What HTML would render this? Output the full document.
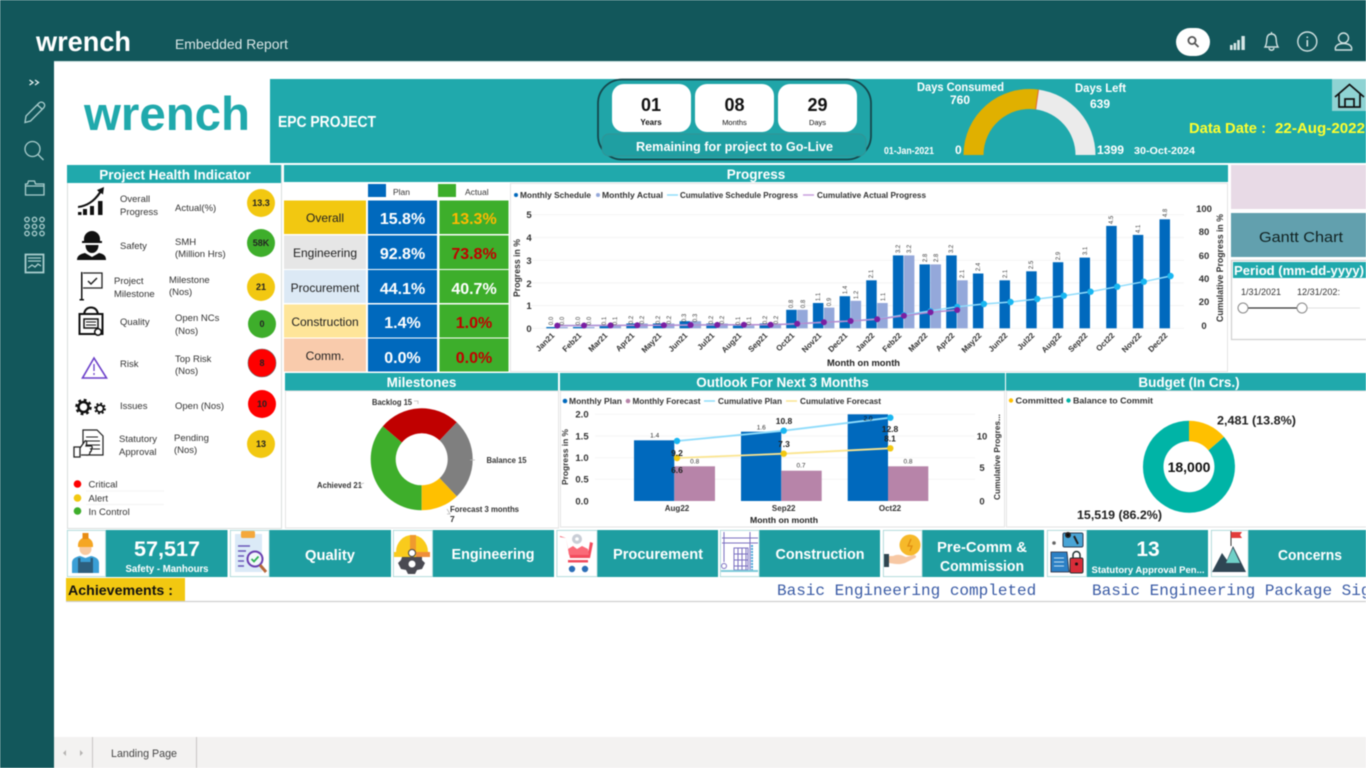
<!DOCTYPE html>
<html lang="en"><head><meta charset="utf-8"><title>Embedded Report</title>
<style>
html,body{margin:0;padding:0;width:1366px;height:768px;overflow:hidden;background:#fff}
svg{display:block;filter:blur(.5px)}
text{font-family:"Liberation Sans",sans-serif}
.m{font-family:"Liberation Mono",monospace}
.h{font-weight:bold;fill:#fff;font-size:13.5px;text-anchor:middle}
.l{font-size:9.5px;fill:#333}
.c{font-size:9px;fill:#222;text-anchor:middle;font-weight:bold}
.t{font-size:12px;fill:#222;text-anchor:middle}
.v{font-size:16px;font-weight:bold;text-anchor:middle}
.lg{font-size:8px;font-weight:bold;fill:#333}
.ax{font-size:9.5px;font-weight:bold;fill:#333;text-anchor:middle}
.xl{font-size:8px;font-weight:bold;fill:#333;text-anchor:end}
.d{font-size:6px;fill:#444;text-anchor:middle}
.cw{font-weight:bold;fill:#fff;text-anchor:middle;font-size:15px}
</style></head><body>
<svg width="1366" height="768" viewBox="0 0 1366 768" xmlns="http://www.w3.org/2000/svg">
<rect width="1366" height="768" fill="#fff"/>
<!-- top + side bars -->
<rect width="1366" height="61" fill="#12575b"/>
<rect y="61" width="54" height="707" fill="#12575b"/>
<rect x="54" y="61" width="1312" height="1" fill="#cfe3e3"/>
<text x="36" y="51" font-size="28" font-weight="bold" fill="#fff" textLength="95" lengthAdjust="spacingAndGlyphs">wrench</text>
<text x="175" y="49" font-size="14" fill="#d9e6e6" textLength="113" lengthAdjust="spacingAndGlyphs">Embedded Report</text>
<!-- top icons -->
<rect x="1176" y="28" width="34" height="28" rx="14" fill="#fff"/>
<g fill="none" stroke="#555" stroke-width="1.8"><circle cx="1192" cy="40.5" r="3.6"/><path d="M1195 43.5l3.5 3.5"/></g>
<g fill="#d6e6e6"><rect x="1230" y="45" width="2.6" height="5"/><rect x="1233.6" y="43" width="2.6" height="7"/><rect x="1237.2" y="40" width="2.6" height="10"/><rect x="1241.4" y="36" width="3.4" height="14"/></g>
<g fill="none" stroke="#cfe0e0" stroke-width="1.4">
<path d="M1265 47c2-3 1.5-6 2-9c.5-3 2.5-4 4.5-4s4 1 4.5 4c.5 3 0 6 2 9z"/><path d="M1269 48c.5 3 4.5 3 5 0M1271.5 34v-2"/>
<circle cx="1307.3" cy="41.5" r="9.5"/><path d="M1307.3 40v6.5M1307.3 36.5v1.5" stroke-width="1.6"/>
<circle cx="1343.5" cy="38" r="5"/><path d="M1335.5 50c-1-3.5 2-6.5 8-6.5s9 3 8 6.5z"/>
</g>
<!-- sidebar icons -->
<g fill="none" stroke="#a9cdcd" stroke-width="1.3">
<path d="M29.5 80l3.5 2.500-3.500 2.500M35 80l3.500 2.500-3.500 2.500" stroke="#e8f2f2"/>
<path d="M26 116l13-13c1.500-1.500 4-1 5 .5c1 1 1 3-.5 4.500L30.500 121l-5.500 1.500zM37.500 105l5 4.500"/>
<circle cx="32.500" cy="149" r="7.500"/><path d="M38 154.500l5.500 5.500"/>
<path d="M25.500 195v-11h2l1-3h6l1 3h8.500v11zM25.500 186h18"/>
<circle cx="27" cy="219.500" r="2.200"/><circle cx="34.500" cy="219.500" r="2.200"/><circle cx="42" cy="219.500" r="2.200"/>
<circle cx="27" cy="226.500" r="2.200"/><circle cx="34.500" cy="226.500" r="2.200"/><circle cx="42" cy="226.500" r="2.200"/>
<circle cx="27" cy="233.500" r="2.200"/><circle cx="34.500" cy="233.500" r="2.200"/><circle cx="42" cy="233.500" r="2.200"/>
<rect x="25.500" y="254.500" width="18" height="18" stroke-width="1.800"/><path d="M28 258h13M28 261h13M28 268l4-3 3 2 3-3 3 2"/>
</g>
<!-- header band -->
<text x="84" y="130" font-size="47" font-weight="bold" fill="#20a9ac" textLength="166" lengthAdjust="spacingAndGlyphs">wrench</text>
<rect x="270" y="79" width="1096" height="84" fill="#20a9ac"/>
<text x="278" y="127" font-size="16" font-weight="bold" fill="#fff" textLength="98" lengthAdjust="spacingAndGlyphs">EPC PROJECT</text>
<rect x="598" y="79.500" width="273" height="80" rx="24" fill="#20a5a8" stroke="#15474c" stroke-width="1.800"/>
<g fill="#fff"><rect x="612" y="84" width="79" height="48" rx="12"/><rect x="695" y="84" width="79" height="48" rx="12"/><rect x="778" y="84" width="79" height="48" rx="12"/></g>
<rect x="602" y="134" width="264" height="22" rx="7" fill="#1f9fa2" stroke="#3a8e90" stroke-width=".7"/>
<g fill="#111" font-weight="bold" text-anchor="middle">
<text x="651" y="111" font-size="18">01</text><text x="734.500" y="111" font-size="18">08</text><text x="817.500" y="111" font-size="18">29</text>
<text x="651" y="125" font-size="8">Years</text><text x="734.500" y="125" font-size="7.500" font-weight="normal">Months</text><text x="817.500" y="125" font-size="7.500" font-weight="normal">Days</text>
</g>
<text x="636" y="151" font-size="13" font-weight="bold" fill="#fff" textLength="197" lengthAdjust="spacingAndGlyphs">Remaining for project to Go-Live</text>
<!-- gauge -->
<path d="M963.500 155A66 66 0 0 1 1038.500 89.600L1035.700 109.400A46 46 0 0 0 983.500 155z" fill="#e0b000"/>
<path d="M1038.500 89.600A66 66 0 0 1 1095.500 155H1075.500A46 46 0 0 0 1035.700 109.400z" fill="#ebebeb"/>
<path d="M1038.500 89.600L1035.700 109.400" stroke="#e0663a" stroke-width="1"/>
<g fill="#fff" font-weight="bold" font-size="12">
<text x="917" y="91" textLength="87" lengthAdjust="spacingAndGlyphs">Days Consumed</text><text x="950" y="104" textLength="20" lengthAdjust="spacingAndGlyphs">760</text>
<text x="1075" y="92" textLength="51" lengthAdjust="spacingAndGlyphs">Days Left</text><text x="1090" y="108" textLength="20" lengthAdjust="spacingAndGlyphs">639</text>
<text x="884" y="154" font-size="10.500" textLength="50" lengthAdjust="spacingAndGlyphs">01-Jan-2021</text><text x="955" y="154">0</text>
<text x="1097" y="154" textLength="27" lengthAdjust="spacingAndGlyphs">1399</text><text x="1134" y="154" font-size="10.500" textLength="61" lengthAdjust="spacingAndGlyphs">30-Oct-2024</text>
</g>
<g fill="#ffff2e" font-weight="bold" font-size="15"><text x="1189" y="133" textLength="77" lengthAdjust="spacingAndGlyphs">Data Date :</text><text x="1275" y="133" textLength="90" lengthAdjust="spacingAndGlyphs">22-Aug-2022</text></g>
<rect x="1332" y="79" width="34" height="32" fill="#8fd3d3"/>
<path d="M1335 97l14.500-12.500L1364 97M1339 94v13h21V94M1345 107v-8h9v8" fill="none" stroke="#111" stroke-width="1.700"/>

<!-- Project health panel -->
<rect x="67.500" y="165.500" width="214" height="363" fill="#fff" stroke="#d9dedd"/>
<rect x="67" y="165" width="214" height="18" fill="#20a9ac"/>
<text class="h" x="175" y="179.500">Project Health Indicator</text>
<text class="l" x="120" y="202">Overall</text><text class="l" x="120" y="215">Progress</text><text class="l" x="175" y="211">Actual(%)</text>
<text class="l" x="120" y="249">Safety</text><text class="l" x="175" y="245">SMH</text><text class="l" x="175" y="257">(Million Hrs)</text>
<text class="l" x="114" y="284">Project</text><text class="l" x="114" y="297">Milestone</text><text class="l" x="169" y="283">Milestone</text><text class="l" x="169" y="295">(Nos)</text>
<text class="l" x="120" y="325">Quality</text><text class="l" x="175" y="321">Open NCs</text><text class="l" x="175" y="334">(Nos)</text>
<text class="l" x="120" y="367">Risk</text><text class="l" x="175" y="362">Top Risk</text><text class="l" x="175" y="374">(Nos)</text>
<text class="l" x="120" y="409">Issues</text><text class="l" x="175" y="409">Open (Nos)</text>
<text class="l" x="119" y="442">Statutory</text><text class="l" x="119" y="455">Approval</text><text class="l" x="174" y="441">Pending</text><text class="l" x="174" y="453">(Nos)</text>
<circle cx="261" cy="203" r="14" fill="#f2c811"/><circle cx="261" cy="243" r="14" fill="#3eae2b"/><circle cx="261" cy="287" r="14" fill="#f2c811"/><circle cx="262" cy="324" r="14" fill="#3eae2b"/><circle cx="262" cy="363" r="14" fill="#fe0000" stroke="#666" stroke-width=".6"/><circle cx="262" cy="404" r="14" fill="#fe0000"/><circle cx="261" cy="444" r="14" fill="#f2c811"/>
<text class="c" x="261" y="206">13.3</text><text class="c" x="261" y="246">58K</text><text class="c" x="261" y="290">21</text><text class="c" x="262" y="327">0</text><text class="c" x="262" y="366">8</text><text class="c" x="262" y="407">10</text><text class="c" x="261" y="447">13</text>
<!-- health icons -->
<g fill="#111">
<rect x="78" y="212" width="3.500" height="3"/><rect x="83" y="209" width="4" height="6"/><rect x="90" y="206" width="4" height="9"/><rect x="98" y="201" width="4.500" height="14"/>
<path d="M78 206c8-1 15-5 21-14l-2-2 7-3-1 7.500-2-1.500c-6 9-14 14-23 15z"/>
<path d="M84 239a8 8 0 0 1 16 0v2h2v2H82v-2h2zM85.500 245h13c0 5-3 8-6.500 8s-6.500-3-6.500-8zM77 260c0-4 3-6 8-7l7 4 7-4c5 1 7 3 7 7z"/>
<path d="M81 272h1.500v27H81zM79.500 299h4.500v1.500h-4.500z"/>
</g>
<g fill="none" stroke="#111">
<path d="M79.500 314h23v20h-23zM84 314c1-5 4-6.500 7-6.500s6 1.500 7 6.500" stroke-width="2"/><rect x="84" y="319" width="14" height="9" stroke-width="1.500"/><path d="M86 322h10M86 325h10" stroke-width="1"/>
<circle cx="98" cy="332" r="3.300" fill="#fff" stroke-width="1.500"/>
<circle cx="83.500" cy="407" r="5" stroke-width="2.500"/><circle cx="83.500" cy="407" r="7" stroke-width="2.500" stroke-dasharray="2.750 2.750"/>
<circle cx="100" cy="408.500" r="3.500" stroke-width="1.800"/><circle cx="100" cy="408.500" r="5" stroke-width="1.800" stroke-dasharray="2 1.930"/>
</g>
<g fill="none" stroke="#222">
<path d="M83 273h19v15H83" stroke-width="1.300"/><path d="M88 281l3 3 6-6" stroke-width="1.500"/>
<path d="M94 358l12.500 20H82.500z" stroke="#6b3fc9" stroke-width="1.600"/><path d="M94 364v7M94 373v2" stroke="#6b3fc9" stroke-width="1.300"/>
<path d="M83 444v-14h14l6 6v19H86" stroke-width="1.200"/><path d="M86 437h12M86 441h14M86 445h14M86 449h14" stroke-width="1"/>
<path d="M74 447h6v10h-6zM80 448l5-7c2-1 2 2 1 5h5c2 0 1 3 0 3c1 1 0 3-1 3c0 2-1 3-2 3H81" stroke-width="1.300" fill="#fff"/>
</g>
<circle cx="77.500" cy="484" r="3.800" fill="#fe0000"/><circle cx="77.500" cy="498" r="3.800" fill="#f2c811"/><circle cx="77.500" cy="511" r="3.800" fill="#3eae2b"/>
<g fill="#333" font-size="9.500"><text x="88.500" y="487.500">Critical</text><text x="88.500" y="501.500">Alert</text><text x="88.500" y="515">In Control</text></g>
<path d="M86 491h78M86 504.500h78" stroke="#f0f0f0" stroke-width=".8"/>

<!-- progress -->
<rect x="284" y="165" width="944" height="17" fill="#20a9ac"/>
<text class="h" x="756" y="179">Progress</text>
<rect x="368" y="184" width="18" height="13" fill="#0069bd"/><text x="393" y="195" font-size="8.500" fill="#333">Plan</text>
<rect x="438" y="184" width="18" height="13" fill="#3dae2b"/><text x="465" y="195" font-size="8.500" fill="#333">Actual</text>
<g>
<rect x="284" y="200.500" width="82" height="33.500" fill="#f2c811"/><rect x="284" y="235.500" width="82" height="33.500" fill="#e6e6e6"/><rect x="284" y="270" width="82" height="33" fill="#dce9f5"/><rect x="284" y="304.500" width="82" height="33" fill="#fee599"/><rect x="284" y="338.500" width="82" height="33" fill="#f9cbac"/>
<rect x="368" y="200.500" width="69" height="33.500" fill="#0069bd"/><rect x="368" y="235.500" width="69" height="33.500" fill="#0069bd"/><rect x="368" y="270" width="69" height="33" fill="#0069bd"/><rect x="368" y="304.500" width="69" height="33" fill="#0069bd"/><rect x="368" y="338.500" width="69" height="33" fill="#0069bd"/>
<rect x="439.500" y="200.500" width="69" height="33.500" fill="#3dae2b"/><rect x="439.500" y="235.500" width="69" height="33.500" fill="#3dae2b"/><rect x="439.500" y="270" width="69" height="33" fill="#3dae2b"/><rect x="439.500" y="304.500" width="69" height="33" fill="#3dae2b"/><rect x="439.500" y="338.500" width="69" height="33" fill="#3dae2b"/>
</g>
<text class="t" x="325" y="222">Overall</text><text class="t" x="325" y="257">Engineering</text><text class="t" x="325" y="292">Procurement</text><text class="t" x="325" y="326">Construction</text><text class="t" x="325" y="360">Comm.</text>
<g fill="#fff"><text class="v" x="402.500" y="224">15.8%</text><text class="v" x="402.500" y="259">92.8%</text><text class="v" x="402.500" y="294">44.1%</text><text class="v" x="402.500" y="328">1.4%</text><text class="v" x="402.500" y="363">0.0%</text></g>
<text class="v" x="474" y="224" fill="#ffb900">13.3%</text><text class="v" x="474" y="259" fill="#c00000">73.8%</text><text class="v" x="474" y="294" fill="#fff">40.7%</text><text class="v" x="474" y="328" fill="#c00000">1.0%</text><text class="v" x="474" y="363" fill="#c00000">0.0%</text>
<!-- progress chart -->
<rect x="510.500" y="183.500" width="717" height="188" fill="#fff" stroke="#e3e3e3"/>
<path d="M530 214.800H1184M530 237.500H1184M530 260.200H1184M530 282.900H1184M530 305.600H1184M530 328.300H1184" stroke="#f4f4f4"/>
<circle cx="516" cy="195" r="2" fill="#0069bd"/><text class="lg" x="520" y="198" textLength="71" lengthAdjust="spacingAndGlyphs">Monthly Schedule</text>
<circle cx="598" cy="195" r="2" fill="#94a8da"/><text class="lg" x="602" y="198" textLength="61" lengthAdjust="spacingAndGlyphs">Monthly Actual</text>
<path d="M667 195h11" stroke="#8fdcfb" stroke-width="1.500"/><text class="lg" x="680" y="198" textLength="118" lengthAdjust="spacingAndGlyphs">Cumulative Schedule Progress</text>
<path d="M803 195h11" stroke="#c89fdc" stroke-width="1.500"/><text class="lg" x="817" y="198" textLength="109" lengthAdjust="spacingAndGlyphs">Cumulative Actual Progress</text>
<text class="ax" transform="translate(520 268) rotate(-90)" textLength="58" lengthAdjust="spacingAndGlyphs">Progress in %</text>
<text class="ax" x="529" y="218">5</text><text class="ax" x="529" y="241">4</text><text class="ax" x="529" y="264">3</text><text class="ax" x="529" y="287">2</text><text class="ax" x="529" y="309">1</text><text class="ax" x="529" y="332">0</text>
<text class="ax" x="1204" y="212">100</text><text class="ax" x="1204" y="235">80</text><text class="ax" x="1204" y="259">60</text><text class="ax" x="1204" y="282">40</text><text class="ax" x="1204" y="305">20</text><text class="ax" x="1204" y="329">0</text>
<text class="ax" transform="translate(1223 268) rotate(-90)" textLength="108" lengthAdjust="spacingAndGlyphs">Cumulative Progress in %</text>
<!-- bars plan -->
<g fill="#0069bd">
<rect x="546.300" y="327" width="10.500" height="1.300"/><rect x="573" y="327" width="10.500" height="1.300"/><rect x="599.600" y="325.700" width="10.500" height="2.600"/><rect x="626.300" y="323.500" width="10.500" height="4.800"/><rect x="652.900" y="323.500" width="10.500" height="4.800"/><rect x="679.600" y="321.200" width="10.500" height="7.100"/><rect x="706.300" y="323.500" width="10.500" height="4.800"/><rect x="732.900" y="325.700" width="10.500" height="2.600"/><rect x="759.600" y="323.500" width="10.500" height="4.800"/><rect x="786.200" y="309.800" width="10.500" height="18.500"/><rect x="812.900" y="303" width="10.500" height="25.300"/><rect x="839.600" y="296.200" width="10.500" height="32.100"/><rect x="866.200" y="280.300" width="10.500" height="48"/><rect x="892.900" y="255.400" width="10.500" height="72.900"/><rect x="919.500" y="264.400" width="10.500" height="63.900"/><rect x="946.200" y="255.400" width="10.500" height="72.900"/><rect x="972.900" y="273.500" width="10.500" height="54.800"/><rect x="999.500" y="280.300" width="10.500" height="48"/><rect x="1026.200" y="271.300" width="10.500" height="57"/><rect x="1052.800" y="262.200" width="10.500" height="66.100"/><rect x="1079.500" y="257.600" width="10.500" height="70.700"/><rect x="1106.200" y="225.900" width="10.500" height="102.400"/><rect x="1132.800" y="234.900" width="10.500" height="93.400"/><rect x="1159.500" y="219.300" width="10.500" height="109"/>
</g>
<!-- bars actual -->
<g fill="#94a8da">
<rect x="557.300" y="327" width="10.500" height="1.300"/><rect x="584" y="327" width="10.500" height="1.300"/><rect x="610.600" y="325.700" width="10.500" height="2.600"/><rect x="637.300" y="323.500" width="10.500" height="4.800"/><rect x="663.900" y="323.500" width="10.500" height="4.800"/><rect x="690.600" y="321.200" width="10.500" height="7.100"/><rect x="717.300" y="323.500" width="10.500" height="4.800"/><rect x="743.900" y="325.700" width="10.500" height="2.600"/><rect x="770.600" y="323.500" width="10.500" height="4.800"/><rect x="797.200" y="309.800" width="10.500" height="18.500"/><rect x="823.900" y="307.600" width="10.500" height="20.700"/><rect x="850.600" y="300.800" width="10.500" height="27.500"/><rect x="877.200" y="303" width="10.500" height="25.300"/><rect x="903.900" y="255.400" width="10.500" height="72.900"/><rect x="930.500" y="264.400" width="10.500" height="63.900"/><rect x="957.200" y="280.300" width="10.500" height="48"/>
</g>
<!-- lines -->
<polyline fill="none" stroke="#8fdcfb" stroke-width="1.500" points="557.300,325.600 584,325.500 610.600,325.400 637.300,325.300 663.900,325.200 690.600,325 717.300,324.900 743.900,324.800 770.600,324.700 797.200,323.700 823.900,322.300 850.600,321 877.200,319 903.900,315 930.500,311 957.200,306.700 983.900,304 1010.500,302 1037.200,299 1063.800,295.700 1090.500,291.700 1117.200,286.700 1143.800,281.700 1170.500,276"/>
<g fill="#18b6f1"><circle cx="903.900" cy="315" r="3"/><circle cx="930.500" cy="311" r="3"/><circle cx="957.200" cy="306.700" r="3"/><circle cx="983.900" cy="304" r="3.200"/><circle cx="1010.500" cy="302" r="3.200"/><circle cx="1037.200" cy="299" r="3.200"/><circle cx="1063.800" cy="295.700" r="3.200"/><circle cx="1090.500" cy="291.700" r="3.200"/><circle cx="1117.200" cy="286.700" r="3.200"/><circle cx="1143.800" cy="281.700" r="3.200"/><circle cx="1170.500" cy="276" r="3.200"/></g>
<polyline fill="none" stroke="#b58ad0" stroke-width="1.500" points="557.300,325.600 584,325.500 610.600,325.400 637.300,325.300 663.900,325.200 690.600,325 717.300,324.900 743.900,324.800 770.600,324.700 797.200,323.700 823.900,322.300 850.600,321 877.200,319.300 903.900,315.700 930.500,312.300 957.200,310"/>
<g fill="#7a1fa2"><circle cx="557.300" cy="325.600" r="3"/><circle cx="584" cy="325.500" r="3"/><circle cx="610.600" cy="325.400" r="3"/><circle cx="637.300" cy="325.300" r="3"/><circle cx="663.900" cy="325.200" r="3"/><circle cx="690.600" cy="325" r="3"/><circle cx="717.300" cy="324.900" r="3"/><circle cx="743.900" cy="324.800" r="3"/><circle cx="770.600" cy="324.700" r="3"/><circle cx="797.200" cy="323.700" r="3"/><circle cx="823.900" cy="322.300" r="3"/><circle cx="850.600" cy="321" r="3"/><circle cx="877.200" cy="319.300" r="3"/><circle cx="903.900" cy="315.700" r="3"/><circle cx="930.500" cy="312.300" r="3"/><circle cx="957.200" cy="310" r="3"/></g>
<!-- data labels -->
<text class="d" transform="translate(553 321) rotate(-90)">0.0</text><text class="d" transform="translate(564 321) rotate(-90)">0.0</text>
<text class="d" transform="translate(580 321) rotate(-90)">0.0</text><text class="d" transform="translate(591 321) rotate(-90)">0.0</text>
<text class="d" transform="translate(606 321) rotate(-90)">0.1</text><text class="d" transform="translate(617 321) rotate(-90)">0.1</text>
<text class="d" transform="translate(633 320) rotate(-90)">0.2</text><text class="d" transform="translate(644 320) rotate(-90)">0.2</text>
<text class="d" transform="translate(660 320) rotate(-90)">0.2</text><text class="d" transform="translate(671 320) rotate(-90)">0.2</text>
<text class="d" transform="translate(686 318) rotate(-90)">0.3</text><text class="d" transform="translate(697 318) rotate(-90)">0.3</text>
<text class="d" transform="translate(713 320) rotate(-90)">0.2</text><text class="d" transform="translate(724 320) rotate(-90)">0.2</text>
<text class="d" transform="translate(740 321) rotate(-90)">0.1</text><text class="d" transform="translate(751 321) rotate(-90)">0.1</text>
<text class="d" transform="translate(767 320) rotate(-90)">0.2</text><text class="d" transform="translate(778 320) rotate(-90)">0.2</text>
<text class="d" transform="translate(793 304) rotate(-90)">0.8</text><text class="d" transform="translate(805 304) rotate(-90)">0.8</text>
<text class="d" transform="translate(820 297) rotate(-90)">1.1</text><text class="d" transform="translate(831 302) rotate(-90)">0.9</text>
<text class="d" transform="translate(847 290) rotate(-90)">1.4</text><text class="d" transform="translate(858 295) rotate(-90)">1.2</text>
<text class="d" transform="translate(873 274) rotate(-90)">2.1</text><text class="d" transform="translate(885 297) rotate(-90)">1.1</text>
<text class="d" transform="translate(900 249) rotate(-90)">3.2</text><text class="d" transform="translate(911 249) rotate(-90)">3.2</text>
<text class="d" transform="translate(927 258) rotate(-90)">2.8</text><text class="d" transform="translate(938 258) rotate(-90)">2.8</text>
<text class="d" transform="translate(953 249) rotate(-90)">3.2</text><text class="d" transform="translate(964 274) rotate(-90)">2.1</text>
<text class="d" transform="translate(980 267) rotate(-90)">2.4</text><text class="d" transform="translate(1007 274) rotate(-90)">2.1</text>
<text class="d" transform="translate(1033 265) rotate(-90)">2.5</text><text class="d" transform="translate(1060 256) rotate(-90)">2.9</text>
<text class="d" transform="translate(1087 251) rotate(-90)">3.1</text><text class="d" transform="translate(1113 220) rotate(-90)">4.5</text>
<text class="d" transform="translate(1140 229) rotate(-90)">4.1</text><text class="d" transform="translate(1167 213) rotate(-90)">4.8</text>
<!-- x labels -->
<text class="xl" transform="translate(555 336) rotate(-45)">Jan21</text><text class="xl" transform="translate(582 336) rotate(-45)">Feb21</text><text class="xl" transform="translate(608 336) rotate(-45)">Mar21</text><text class="xl" transform="translate(635 336) rotate(-45)">Apr21</text><text class="xl" transform="translate(662 336) rotate(-45)">May21</text><text class="xl" transform="translate(688 336) rotate(-45)">Jun21</text><text class="xl" transform="translate(715 336) rotate(-45)">Jul21</text><text class="xl" transform="translate(742 336) rotate(-45)">Aug21</text><text class="xl" transform="translate(768 336) rotate(-45)">Sep21</text><text class="xl" transform="translate(795 336) rotate(-45)">Oct21</text><text class="xl" transform="translate(822 336) rotate(-45)">Nov21</text><text class="xl" transform="translate(848 336) rotate(-45)">Dec21</text><text class="xl" transform="translate(875 336) rotate(-45)">Jan22</text><text class="xl" transform="translate(902 336) rotate(-45)">Feb22</text><text class="xl" transform="translate(928 336) rotate(-45)">Mar22</text><text class="xl" transform="translate(955 336) rotate(-45)">Apr22</text><text class="xl" transform="translate(982 336) rotate(-45)">May22</text><text class="xl" transform="translate(1008 336) rotate(-45)">Jun22</text><text class="xl" transform="translate(1035 336) rotate(-45)">Jul22</text><text class="xl" transform="translate(1062 336) rotate(-45)">Aug22</text><text class="xl" transform="translate(1088 336) rotate(-45)">Sep22</text><text class="xl" transform="translate(1115 336) rotate(-45)">Oct22</text><text class="xl" transform="translate(1142 336) rotate(-45)">Nov22</text><text class="xl" transform="translate(1168 336) rotate(-45)">Dec22</text>
<text x="827" y="366" font-size="9" font-weight="bold" fill="#222" textLength="73" lengthAdjust="spacingAndGlyphs">Month on month</text>
<!-- right column -->
<rect x="1231" y="165" width="135" height="44" fill="#e8dae6"/>
<rect x="1231" y="213" width="135" height="44" fill="#62a0ae"/>
<text x="1301" y="242" font-size="14.500" fill="#122" text-anchor="middle" textLength="84" lengthAdjust="spacingAndGlyphs">Gantt Chart</text>
<rect x="1231.500" y="260.500" width="140" height="79" fill="#fff" stroke="#d2d2d2" stroke-width="1.300"/>
<rect x="1233" y="262" width="133" height="16" fill="#20a9ac"/>
<text x="1234" y="275" font-size="12.500" font-weight="bold" fill="#fff" textLength="130" lengthAdjust="spacingAndGlyphs">Period (mm-dd-yyyy)</text>
<text x="1241" y="295" font-size="9" fill="#333" textLength="40" lengthAdjust="spacingAndGlyphs">1/31/2021</text>
<text x="1297" y="295" font-size="9" fill="#333" textLength="43" lengthAdjust="spacingAndGlyphs">12/31/202:</text>
<path d="M1302 308H1360" stroke="#e0e0e0" stroke-width="1"/><path d="M1243 308H1302" stroke="#333" stroke-width="1.300"/>
<circle cx="1243" cy="308" r="5" fill="#fff" stroke="#888"/><circle cx="1302" cy="308" r="5" fill="#fff" stroke="#888"/>

<!-- milestones -->
<rect x="285.500" y="391" width="273" height="137" fill="#fff" stroke="#e3e3e3"/>
<rect x="285" y="373" width="273" height="17.500" fill="#20a9ac"/>
<text class="h" x="421.500" y="387">Milestones</text>
<path d="M421.700 510.300A51 51 0 0 1 382.840 426.270L401.890 442.460A26 26 0 0 0 421.700 485.300z" fill="#3eae2b"/>
<path d="M382.840 426.270A51 51 0 0 1 456.770 422.270L439.580 440.420A26 26 0 0 0 401.890 442.460z" fill="#c00000"/>
<path d="M456.770 422.270A51 51 0 0 1 456.780 496.320L439.580 478.170A26 26 0 0 0 439.580 440.420z" fill="#7f7f7f"/>
<path d="M456.780 496.320A51 51 0 0 1 421.700 510.300V485.300A26 26 0 0 0 439.580 478.170z" fill="#ffc000"/>
<g fill="#333" font-size="8.500" font-weight="bold"><text x="372" y="405" textLength="40" lengthAdjust="spacingAndGlyphs">Backlog 15</text><text x="486.500" y="463" textLength="40" lengthAdjust="spacingAndGlyphs">Balance 15</text><text x="317" y="488" textLength="45" lengthAdjust="spacingAndGlyphs">Achieved 21</text><text x="450" y="512" textLength="69" lengthAdjust="spacingAndGlyphs">Forecast 3 months</text><text x="450" y="522">7</text></g>
<path d="M414 401h4v3M475 460h-5M364 483l-6 2M447 509l3 5h-3" fill="none" stroke="#bbb" stroke-width=".8"/>

<!-- outlook -->
<rect x="560.500" y="391" width="444" height="136" fill="#fff" stroke="#e3e3e3"/>
<rect x="560" y="373" width="445" height="17.500" fill="#20a9ac"/>
<text class="h" x="782.500" y="387">Outlook For Next 3 Months</text>
<circle cx="565" cy="401" r="2.300" fill="#0069bd"/><text class="lg" x="569" y="404" textLength="53" lengthAdjust="spacingAndGlyphs">Monthly Plan</text>
<circle cx="628" cy="401" r="2.300" fill="#b784a9"/><text class="lg" x="632.500" y="404" textLength="68" lengthAdjust="spacingAndGlyphs">Monthly Forecast</text>
<path d="M704 401h11" stroke="#8fdcfb" stroke-width="1.500"/><text class="lg" x="718" y="404" textLength="64" lengthAdjust="spacingAndGlyphs">Cumulative Plan</text>
<path d="M786 401h11" stroke="#fbe58f" stroke-width="1.500"/><text class="lg" x="800" y="404" textLength="81" lengthAdjust="spacingAndGlyphs">Cumulative Forecast</text>
<path d="M595 414.300H975M595 436H975M595 457.700H975M595 479.300H975" stroke="#f5f5f5"/>
<text class="ax" x="582" y="417.500">2.0</text><text class="ax" x="582" y="439.500">1.5</text><text class="ax" x="582" y="461">1.0</text><text class="ax" x="582" y="482.500">0.5</text><text class="ax" x="582" y="504.500">0.0</text><text class="ax" x="982" y="439.500">10</text><text class="ax" x="982" y="471">5</text><text class="ax" x="982" y="504.500">0</text>
<text class="ax" style="font-size:8.5px" transform="translate(568 457) rotate(-90)" textLength="56" lengthAdjust="spacingAndGlyphs">Progress in %</text>
<text class="ax" style="font-size:8.5px" transform="translate(1000 457) rotate(-90)" textLength="86" lengthAdjust="spacingAndGlyphs">Cumulative Progres...</text>
<g fill="#0069bd"><rect x="634" y="440.300" width="40.300" height="60.700"/><rect x="741" y="431.700" width="40.300" height="69.300"/><rect x="847.700" y="414.300" width="40.300" height="86.700"/></g>
<g fill="#b784a9"><rect x="674.300" y="466.300" width="40.700" height="34.700"/><rect x="781.300" y="470.700" width="40.400" height="30.300"/><rect x="888" y="466.300" width="40.300" height="34.700"/></g>
<polyline points="677,441 783.700,430.700 890.300,417.700" fill="none" stroke="#8fdcfb" stroke-width="1.800"/>
<polyline points="677,458 783.700,453.700 890.300,448.300" fill="none" stroke="#fbe58f" stroke-width="1.800"/>
<g fill="#18b6f1"><circle cx="677" cy="441" r="3.200"/><circle cx="783.700" cy="430.700" r="3.200"/><circle cx="890.300" cy="417.700" r="3.200"/></g>
<g fill="#f2c811"><circle cx="677" cy="458" r="3.200"/><circle cx="783.700" cy="453.700" r="3.200"/><circle cx="890.300" cy="448.300" r="3.200"/></g>
<g font-size="6.500" fill="#333" text-anchor="middle"><text x="654.700" y="437.500">1.4</text><text x="694.700" y="463.500">0.8</text><text x="761.300" y="429.500">1.6</text><text x="801" y="467.500">0.7</text><text x="868" y="420.500" fill="#111">2.0</text><text x="908" y="463.500">0.8</text></g>
<g font-size="8.500" fill="#222" text-anchor="middle" font-weight="bold"><text x="677" y="456">9.2</text><text x="677" y="473">6.6</text><text x="784" y="424">10.8</text><text x="784" y="447">7.3</text><text x="890" y="432">12.8</text><text x="890" y="441.500">8.1</text></g>
<g font-size="8" font-weight="bold" fill="#333" text-anchor="middle"><text x="677" y="511">Aug22</text><text x="783.700" y="511">Sep22</text><text x="890" y="511">Oct22</text></g>
<text x="750" y="523" font-size="8.500" font-weight="bold" fill="#222" textLength="68" lengthAdjust="spacingAndGlyphs">Month on month</text>

<!-- budget -->
<rect x="1006.500" y="391" width="360" height="136" fill="#fff" stroke="#e3e3e3"/>
<rect x="1006" y="373" width="360" height="17.500" fill="#20a9ac"/>
<text class="h" x="1189" y="387">Budget (In Crs.)</text>
<circle cx="1011" cy="400.500" r="2.200" fill="#ffc000"/><text class="lg" x="1015.500" y="403.500" textLength="48" lengthAdjust="spacingAndGlyphs">Committed</text>
<circle cx="1068.500" cy="400.500" r="2.200" fill="#00b4a6"/><text class="lg" x="1073" y="403.500" textLength="80" lengthAdjust="spacingAndGlyphs">Balance to Commit</text>
<path d="M1224 436.900A46 46 0 1 1 1189 420.700L1189 441.200A25.500 25.500 0 1 0 1208.400 450.200z" fill="#00b4a6"/>
<path d="M1189 420.700A46 46 0 0 1 1224 436.900L1208.400 450.200A25.500 25.500 0 0 0 1189 441.200z" fill="#ffc000"/>
<text x="1189" y="472" font-size="14" font-weight="bold" fill="#111" text-anchor="middle">18,000</text>
<text x="1217" y="424.500" font-size="12" font-weight="bold" fill="#222" textLength="79" lengthAdjust="spacingAndGlyphs">2,481 (13.8%)</text>
<text x="1077" y="519" font-size="12" font-weight="bold" fill="#222" textLength="85" lengthAdjust="spacingAndGlyphs">15,519 (86.2%)</text>

<!-- bottom cards -->
<g fill="#1e9ea1">
<rect x="67" y="530" width="160.500" height="47"/><rect x="230" y="530" width="161" height="47"/><rect x="393" y="530" width="161" height="47"/><rect x="556.500" y="530" width="161.500" height="47"/><rect x="720" y="530" width="160" height="47"/><rect x="883" y="530" width="161" height="47"/><rect x="1047" y="530" width="161" height="47"/><rect x="1211" y="530" width="155" height="47"/>
</g>
<g fill="#fff" stroke="#bfe0e0" stroke-width=".8">
<rect x="67.500" y="530.500" width="38" height="46"/><rect x="230.500" y="530.500" width="38.500" height="46"/><rect x="393.500" y="530.500" width="39" height="46"/><rect x="557" y="530.500" width="40" height="46"/><rect x="720.500" y="530.500" width="38.500" height="46"/><rect x="883.500" y="530.500" width="38.500" height="46"/><rect x="1047.500" y="530.500" width="39" height="46"/><rect x="1211.500" y="530.500" width="36.500" height="46"/>
</g>
<!-- card icons -->
<path d="M78 545a7.500 7.500 0 0 1 15 0v2H78z" fill="#f5a623"/><path d="M82.500 533h6v6h-6z" fill="#e88d14"/>
<path d="M79.500 547h12v2a6 6 0 0 1-12 0z" fill="#f8caa0"/>
<path d="M72 573v-10c0-4 3-6 8-7l5.500 2 5.500-2c5 1 8 3 8 7v10z" fill="#3a9fd6"/><path d="M78 573v-15h2.500v4h10v-4H93v15z" fill="#2d5f7e"/>
<rect x="235" y="534" width="27" height="38" fill="#dbeaf7"/><rect x="241" y="531" width="14" height="7" rx="1.500" fill="#f4a83c"/>
<path d="M238 546h12M238 551h8M238 556h6M238 561h6M238 566h6" stroke="#6a58b8" stroke-width="1.500"/>
<circle cx="255" cy="559" r="7.500" fill="#f2f7fb" stroke="#6a3fb0" stroke-width="2"/><path d="M260 565l6 7" stroke="#b5683a" stroke-width="3"/><path d="M251.500 559l2.500 2.500 4.500-5" stroke="#2eb352" stroke-width="1.800" fill="none"/>
<path d="M396 552a16 17 0 0 1 32 0z" fill="#f9cb1c"/><rect x="410" y="535" width="6" height="17" fill="#f09a2e"/>
<rect x="394" y="552" width="22" height="5" fill="#f9cb1c"/><rect x="416" y="552" width="14" height="5" fill="#ef8f3a"/>
<path d="M402 557h20v3l3 3-3 6-5 1-2 4h-7l-2-4-5-1-3-6 3-3z" fill="#4a4a52"/><circle cx="412" cy="564" r="3.500" fill="#fff"/><circle cx="412" cy="553" r="3.500" fill="#fff" stroke="#444"/>
<path d="M560 536l6 2 3 16h19l2-12 3 1-3 15h-20l-4-20-6-1z" fill="#f24a5c"/><path d="M568 549l5-3 4 3 5-3 6 3 1 6h-20z" fill="#fa6a78"/><circle cx="577" cy="539" r="5" fill="#c9ced6"/><circle cx="577" cy="539" r="1.800" fill="#fff"/><rect x="568" y="560" width="20" height="2.500" fill="#f24a5c"/><circle cx="572" cy="569" r="3.200" fill="#2c6fb7"/><circle cx="585" cy="569" r="3.200" fill="#2c6fb7"/>
<g fill="none" stroke="#7a6fc0" stroke-width="1"><path d="M722 538h36M722 543h36M724 532v30M750 532v40M734 548h14v22h-14zM738 548v22M742 548v22M746 548v22M734 554h14M734 560h14M734 566h14"/><circle cx="724" cy="566" r="2.500"/></g><path d="M721 571h37" stroke="#7ecbd9" stroke-width="2"/><path d="M752 545v25" stroke="#4aa3d8" stroke-width="2" stroke-dasharray="2 1"/>
<circle cx="910" cy="545" r="10.500" fill="#f6b92a"/><path d="M911 539l-3 7h4l-2 5" fill="none" stroke="#e08d10" stroke-width="1.300"/>
<path d="M889 556h4c6-3 10 0 13 1l8-2c2 0 3 2 1 3l-10 5c-6 2-10 1-16 0z" fill="#f7c8a4"/><rect x="884" y="554" width="5" height="13" fill="#2f4650"/>
<rect x="1063" y="533" width="20" height="14" rx="1.500" fill="#49a5d6" stroke="#2a3f55"/><path d="M1068 537a2 2 0 1 1 .01 0zM1074 536l4 8" stroke="#222" stroke-width="2"/>
<path d="M1051 552h16l2 20h-18z" fill="#2c80c5" stroke="#223" stroke-width=".8"/><path d="M1054 558h10M1054 562h10M1054 566h10" stroke="#bfe0f4"/>
<rect x="1070" y="558" width="13" height="15" rx="1.500" fill="#d72c38" stroke="#233"/><path d="M1073 558v-3a3.500 3.500 0 0 1 7 0v3" fill="none" stroke="#233" stroke-width="1.500"/><circle cx="1076.500" cy="564" r="1.500" fill="#111"/><circle cx="1054" cy="543" r="1.800" fill="#666"/>
<path d="M1212 572l10-19 5 7 6-14 13 26z" fill="#2f4654"/><path d="M1226 563l7-15 7 15z" fill="#6fd0c7"/><path d="M1231 546v-15" stroke="#333"/><path d="M1231 532h11l-2 3 2 3h-11z" fill="#e23b3b"/>
<!-- card text -->
<text class="cw" x="167" y="556" style="font-size:21px" textLength="66" lengthAdjust="spacingAndGlyphs">57,517</text>
<text class="cw" x="167" y="572" style="font-size:10px" textLength="83" lengthAdjust="spacingAndGlyphs">Safety - Manhours</text>
<text class="cw" x="330" y="560" textLength="50" lengthAdjust="spacingAndGlyphs">Quality</text>
<text class="cw" x="493" y="559" textLength="83" lengthAdjust="spacingAndGlyphs">Engineering</text>
<text class="cw" x="658" y="559" textLength="90" lengthAdjust="spacingAndGlyphs">Procurement</text>
<text class="cw" x="820" y="559" textLength="89" lengthAdjust="spacingAndGlyphs">Construction</text>
<text class="cw" x="982" y="552" textLength="90" lengthAdjust="spacingAndGlyphs">Pre-Comm &amp;</text>
<text class="cw" x="982" y="571" textLength="84" lengthAdjust="spacingAndGlyphs">Commission</text>
<text class="cw" x="1148" y="556" style="font-size:21px">13</text>
<text class="cw" x="1148" y="573" style="font-size:9.500px" textLength="113" lengthAdjust="spacingAndGlyphs">Statutory Approval Pen...</text>
<text class="cw" x="1310" y="560" textLength="64" lengthAdjust="spacingAndGlyphs">Concerns</text>
<!-- achievements -->
<rect x="66" y="578" width="1300" height="23" fill="#fff"/>
<rect x="66" y="578" width="119" height="23" fill="#f2c811"/>
<path d="M66 601.500H1366" stroke="#cfcfcf" stroke-width="1.300"/>
<text x="68" y="595" font-size="14" font-weight="bold" fill="#111" textLength="105" lengthAdjust="spacingAndGlyphs">Achievements :</text>
<text class="m" x="777" y="595" font-size="16" fill="#3a5ba5">Basic Engineering completed</text>
<text class="m" x="1092" y="595" font-size="16" fill="#3a5ba5">Basic Engineering Package Sig</text>
<!-- tab bar -->
<rect x="54" y="737" width="1312" height="31" fill="#f3f2f1"/>
<path d="M92.500 737v31M196.500 737v31" stroke="#c8c6c4"/>
<path d="M66 750l-3 3 3 3zM80 750l3 3-3 3z" fill="#b5b3b1"/>
<text x="111" y="757" font-size="11" fill="#444" textLength="66" lengthAdjust="spacingAndGlyphs">Landing Page</text>
</svg>
</body></html>
